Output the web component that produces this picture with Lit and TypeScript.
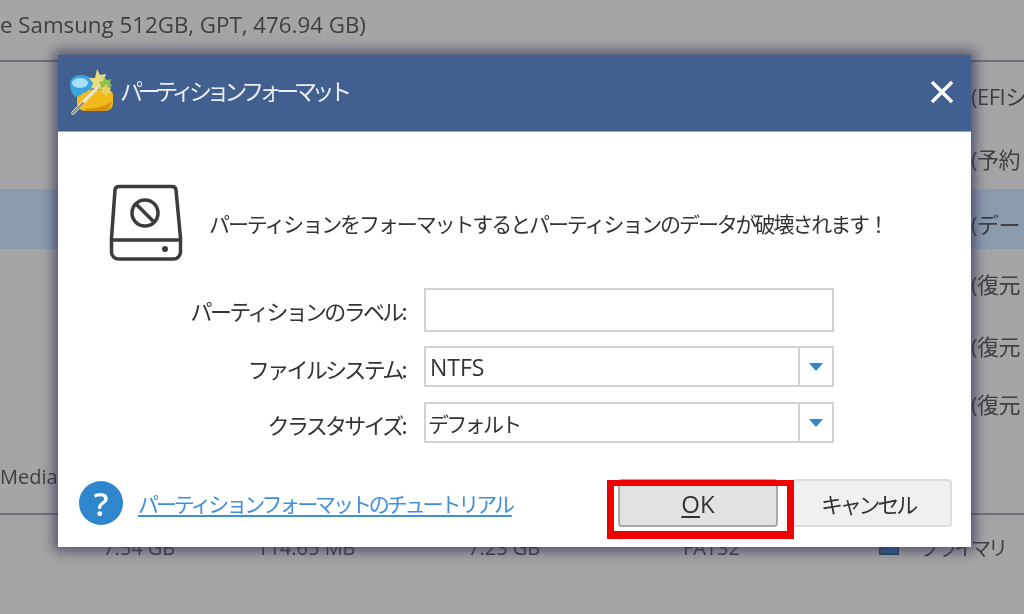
import { LitElement, html, css, svg } from 'lit';
import { customElement, state } from 'lit/decorators.js';

const backgroundRows = [
  { text: '(EFIシ', height: 65, selected: false },
  { text: '(予約', height: 62, selected: false },
  { text: '(デー', height: 60, selected: true },
  { text: '(復元', height: 68, selected: false },
  { text: '(復元', height: 56, selected: false },
  { text: '(復元', height: 60, selected: false },
];

const appIcon = svg`
  <svg class="app-icon" width="50" height="50" viewBox="0 0 50 50">
    <path d="M4 17c0-6 5-9 11-9 6 0 11 2 12 7l-2 12-16 3c-3-3-5-8-5-13z" fill="#3ba4e0"></path>
    <ellipse cx="14" cy="16" rx="8" ry="5" fill="#a8e0f5"></ellipse>
    <path d="M11 30l12-7h18c4 0 6 2 6 6v7c0 5-4 8-9 8H20c-5 0-9-3-9-8z" fill="#f0bb1a"></path>
    <path d="M18 42c8-1 20-1 28-8-1 6-4 10-9 10H20z" fill="#d8920c"></path>
    <path d="M31 2l3 6 6-1-2 6 4 4-6 1-1 6-4-4-6 2 2-6-4-5 6 0z" fill="#e8dc80"></path>
    <path d="M38 10l3 3 4-1-1 4 2 3-4 1-1 4-3-3-4 1 1-4-2-3 4-1z" fill="#8cc04a"></path>
    <path d="M40 17l2 3 3 .5-1 3 1 3-3 0-2 2-2-2-3 0 1-3-1-3 3-.5z" fill="#e8d060"></path>
    <path d="M7 46L31 21" stroke="#e9e4c8" stroke-width="3.500" stroke-linecap="round"></path>
    <path d="M7 46l10-10" stroke="#8a8a78" stroke-width="2" stroke-linecap="round"></path>
  </svg>
`;

const diskIcon = svg`
  <svg width="74" height="78" viewBox="0 0 74 78" fill="none" stroke="#3c3c3c" stroke-width="3.500">
    <path d="M10 2.500h53a4 4 0 0 1 4 3.500l4.500 48v14a7 7 0 0 1-7 7H9.500a7 7 0 0 1-7-7V54L6 6a4 4 0 0 1 4-3.500z" stroke-linejoin="round"></path>
    <path d="M3 56h68"></path>
    <circle cx="36" cy="29" r="13"></circle>
    <path d="M27 20l18 18"></path>
    <circle cx="56" cy="65" r="3" fill="#3c3c3c" stroke="none"></circle>
  </svg>
`;

const comboArrow = svg`
  <svg width="14" height="8" viewBox="0 0 14 8"><path d="M0 0h14L7 8z" fill="#2f86cc"></path></svg>
`;

const comboFields = [
  { name: 'ファイルシステム:', value: 'NTFS', latin: true },
  { name: 'クラスタサイズ:', value: 'デフォルト', latin: false },
];

@customElement('app-root')
export class AppRoot extends LitElement {
  @state() label = '';

  static styles = css`
    :host {
      display: block;
      font-family: "Open Sans", "Noto Sans CJK JP", sans-serif;
    }

    .page {
      background-color: #a5a5a5;
      color: #3e3e44;
      filter: blur(0.5px);
      font-size: 21px;
      height: 614px;
      overflow: hidden;
      position: relative;
      width: 1024px;
    }

    .disk-title {
      align-items: center;
      border-bottom: 2px solid #6f6f7c;
      box-sizing: border-box;
      display: flex;
      font-size: 22.3px;
      height: 62px;
      padding-bottom: 12px;
      white-space: nowrap;
    }

    .row {
      align-items: center;
      display: flex;
      font-size: 22px;
      letter-spacing: -0.5px;
      overflow: hidden;
      padding-left: 971px;
      white-space: nowrap;
    }

    .row.selected {
      background-color: #8b9cae;
      box-sizing: border-box;
      padding-top: 8px;
    }

    .media {
      align-items: center;
      border-bottom: 2px solid #6f6f7c;
      box-sizing: border-box;
      display: flex;
      font-size: 20px;
      height: 82px;
      padding-top: 6px;
    }

    .volume {
      align-items: center;
      box-sizing: border-box;
      display: grid;
      font-size: 20px;
      grid-template-columns: 154px 211px 215px 196px 41px auto;
      height: 56px;
      padding-left: 103px;
      padding-top: 8px;
      white-space: nowrap;
    }

    .volume-type {
      letter-spacing: -3px;
    }

    .swatch {
      background-color: #2f6597;
      border: 2px solid #33475f;
      box-sizing: border-box;
      height: 16px;
      width: 20px;
    }

    .dialog {
      background-color: #ffffff;
      box-shadow: 0 0 12px 4px rgba(50, 50, 85, 0.75);
      color: #333333;
      display: flex;
      flex-direction: column;
      font-family: "Noto Sans CJK JP", sans-serif;
      height: 492px;
      left: 58px;
      position: absolute;
      top: 55px;
      width: 913px;
    }

    .titlebar {
      align-items: center;
      background-color: #42608f;
      border-bottom: 1px solid #8ea6c8;
      box-sizing: border-box;
      color: #e8edf4;
      display: flex;
      flex: none;
      font-size: 23px;
      height: 77px;
      letter-spacing: -5.4px;
      padding-bottom: 6px;
      padding-left: 8px;
    }

    .app-icon {
      margin-right: 4px;
      margin-top: 4px;
    }

    .titlebar span {
      flex-grow: 1;
    }

    .close {
      display: flex;
      margin-right: 17px;
      margin-top: 4px;
    }

    .message {
      align-items: center;
      display: flex;
      font-size: 21px;
      letter-spacing: -2.1px;
      margin-top: 52px;
      padding-left: 51px;
      white-space: nowrap;
    }

    .message span {
      margin-left: 26px;
    }

    .form {
      align-items: start;
      column-gap: 17px;
      display: grid;
      grid-template-columns: 349px 410px;
      margin-top: 26px;
    }

    .field-label {
      font-size: 22px;
      letter-spacing: -2.7px;
      line-height: 44px;
      padding-right: 2px;
      text-align: right;
      white-space: nowrap;
    }

    .input,
    .combo {
      border: 2px solid #d2d2d2;
      box-sizing: border-box;
      width: 410px;
    }

    .input {
      background: #ffffff;
      display: block;
      height: 44px;
      margin-bottom: 14px;
      outline: none;
    }

    .combo {
      align-items: center;
      display: flex;
      height: 41px;
      margin-bottom: 15px;
    }

    .combo-value {
      flex-grow: 1;
      font-size: 21px;
      letter-spacing: -2.7px;
      padding-left: 2px;
    }

    .combo-value.latin {
      font-family: "Open Sans", sans-serif;
      font-size: 23px;
      letter-spacing: 0;
      padding-left: 4px;
    }

    .combo-button {
      align-items: center;
      align-self: stretch;
      border-left: 2px solid #d2d2d2;
      display: flex;
      justify-content: center;
      width: 32px;
    }

    .footer {
      align-items: center;
      display: flex;
      margin-top: 21px;
      padding: 0 19px 0 21px;
    }

    .help {
      align-items: center;
      background-color: #2f86cd;
      border-radius: 50%;
      color: #ffffff;
      display: flex;
      flex: none;
      font-family: "Open Sans", sans-serif;
      font-size: 33px;
      font-weight: 600;
      height: 44px;
      justify-content: center;
      width: 44px;
    }

    .link {
      color: #3f8fdc;
      font-size: 21px;
      letter-spacing: -3.1px;
      margin-left: 15px;
      margin-right: auto;
      text-decoration: underline;
      text-underline-offset: 3px;
      white-space: nowrap;
    }

    .ok-wrap {
      position: relative;
    }

    button {
      border-radius: 4px;
      box-sizing: border-box;
      color: #333333;
      font-family: "Open Sans", "Noto Sans CJK JP", sans-serif;
      font-size: 24px;
      height: 48px;
      padding: 0;
      width: 160px;
    }

    .ok {
      background-color: #e2e2e2;
      border: 2px solid #a9a9a9;
    }

    .ok u {
      text-underline-offset: 3px;
    }

    .cancel {
      background-color: #f0f0f0;
      border: 2px solid #dddddd;
      font-family: "Noto Sans CJK JP", sans-serif;
      font-size: 22px;
      letter-spacing: -3.2px;
      margin-left: 14px;
      padding-right: 8px;
    }

    .highlight {
      border-color: #ef0000;
      border-style: solid;
      border-width: 6px 7px 8px 7px;
      box-sizing: border-box;
      height: 59px;
      left: -11px;
      pointer-events: none;
      position: absolute;
      top: 1px;
      width: 187px;
    }
  `;

  renderBackground() {
    return html`
      <div class="disk-title">e Samsung 512GB, GPT, 476.94 GB)</div>
      ${backgroundRows.map(row => html`
        <div class="row ${row.selected ? 'selected' : ''}" style="height: ${row.height}px">${row.text}</div>
      `)}
      <div class="media">Media</div>
      <div class="volume">
        <span>7.54 GB</span>
        <span>114.65 MB</span>
        <span>7.23 GB</span>
        <span>FAT32</span>
        <span class="swatch"></span>
        <span class="volume-type">プライマリ</span>
      </div>
    `;
  }

  renderForm() {
    return html`
      <div class="form">
        <div class="field-label">パーティションのラベル:</div>
        <input class="input" .value=${this.label} @input=${(e: Event) => { this.label = (e.target as HTMLInputElement).value; }}>
        ${comboFields.map(field => html`
          <div class="field-label">${field.name}</div>
          <div class="combo">
            <div class="combo-value ${field.latin ? 'latin' : ''}">${field.value}</div>
            <div class="combo-button">${comboArrow}</div>
          </div>
        `)}
      </div>
    `;
  }

  render() {
    return html`
      <div class="page">
        ${this.renderBackground()}
        <div class="dialog">
          <header class="titlebar">
            ${appIcon}
            <span>パーティションフォーマット</span>
            <div class="close">
              <svg width="24" height="24" viewBox="0 0 24 24"><path d="M2 2l20 20M22 2L2 22" stroke="#ffffff" stroke-width="3.500"></path></svg>
            </div>
          </header>
          <div class="message">
            ${diskIcon}
            <span>パーティションをフォーマットするとパーティションのデータが破壊されます！</span>
          </div>
          ${this.renderForm()}
          <div class="footer">
            <div class="help">?</div>
            <a class="link">パーティションフォーマットのチュートリアル</a>
            <div class="ok-wrap">
              <button class="ok"><u>O</u>K</button>
              <div class="highlight"></div>
            </div>
            <button class="cancel">キャンセル</button>
          </div>
        </div>
      </div>
    `;
  }
}
